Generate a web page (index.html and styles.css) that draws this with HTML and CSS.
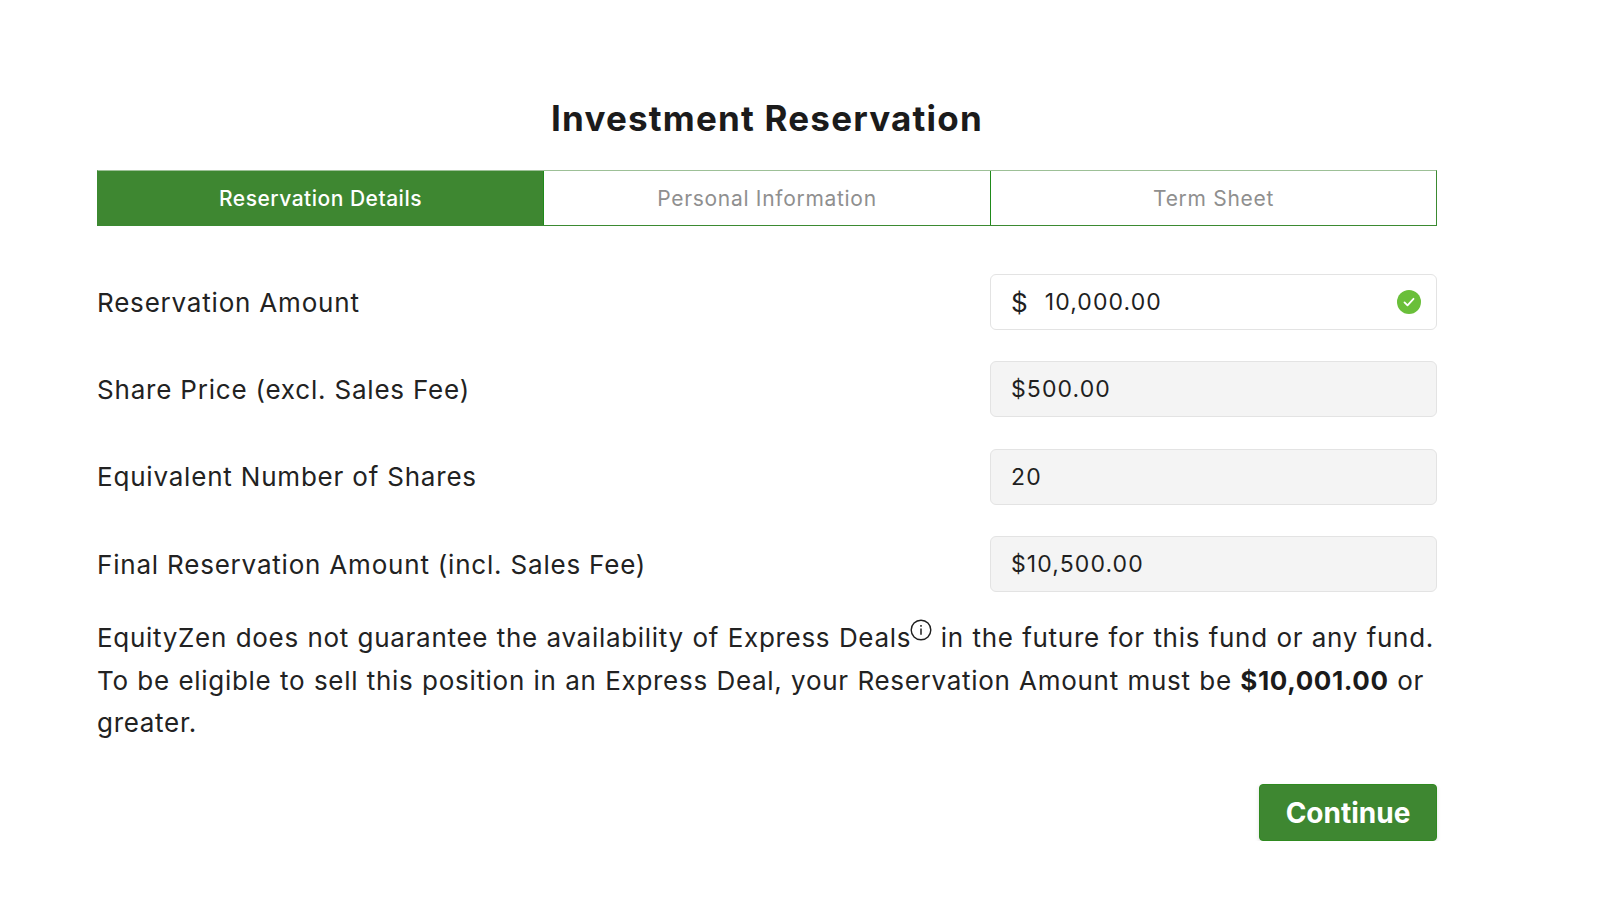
FILE: index.html
```html
<!DOCTYPE html>
<html lang="en">
<head>
<meta charset="utf-8">
<title>Investment Reservation</title>
<link rel="stylesheet" href="styles.css">
</head>
<body>
<main class="page">
  <h1 class="title">Investment Reservation</h1>
  <div class="tabs">
    <div class="tab tab-active">Reservation Details</div>
    <div class="tab">Personal Information</div>
    <div class="tab">Term Sheet</div>
  </div>
  <div class="rows">
    <div class="row">
      <label class="label">Reservation Amount</label>
      <div class="field field-edit">
        <span class="dollar">$</span><span class="amount">10,000.00</span>
        <svg class="check" width="24" height="24" viewBox="0 0 24 24"><circle cx="12" cy="12" r="12" fill="#6abf3a"/><path d="M7.5 12.4l3 3 6-6.6" fill="none" stroke="#fff" stroke-width="1.8" stroke-linecap="round" stroke-linejoin="round"/></svg>
      </div>
    </div>
    <div class="row">
      <label class="label">Share Price (excl. Sales Fee)</label>
      <div class="field">$500.00</div>
    </div>
    <div class="row">
      <label class="label">Equivalent Number of Shares</label>
      <div class="field">20</div>
    </div>
    <div class="row">
      <label class="label">Final Reservation Amount (incl. Sales Fee)</label>
      <div class="field">$10,500.00</div>
    </div>
  </div>
  <p class="note">EquityZen does not guarantee the availability of Express Deals<svg class="info" width="22" height="22" viewBox="0 0 22 22"><circle cx="11" cy="11" r="9.8" fill="none" stroke="#1f1f1f" stroke-width="1.4"/><path d="M11 9.6v6.2M11 6v1.8" stroke="#1f1f1f" stroke-width="1.5" fill="none"/></svg> in the future for this fund or any fund. To be eligible to sell this position in an Express Deal, your Reservation Amount must be <strong>$10,001.00</strong> or greater.</p>
  <div class="actions"><button class="continue" type="button">Continue</button></div>
</main>
</body>
</html>
```
FILE: styles.css
```css
* { box-sizing: border-box; }
html, body { margin: 0; padding: 0; background: #fff; }
body { font-family: Inter, "Open Sans", "Liberation Sans", sans-serif; color: #1f1f1f; }
.page { width: 1340px; margin-left: 97px; padding-top: 94px; }
.title { margin: 0; font-size: 35px; line-height: 48px; font-weight: 700; text-align: center; color: #1b1b1b; letter-spacing: 1.2px; }
.tabs { display: grid; grid-template-columns: 445px 447px 446px; height: 56px; margin-top: 28px; border: 1px solid #3b8a31; border-top-color: #9dc097; }
.tab { display: flex; align-items: center; justify-content: center; font-size: 21px; letter-spacing: .7px; color: #8f8f8f; border-left: 1px solid #1f8a1a; }
.tab:first-child { border-left: 0; }
.tab-active { background: #3e8731; color: #fff; font-weight: 500; letter-spacing: .5px; }
.rows { display: flex; flex-direction: column; gap: 31.4px; margin-top: 48px; }
.row { display: flex; justify-content: space-between; align-items: center; }
.label { font-size: 26px; letter-spacing: .8px; color: #222; }
.field { display: flex; align-items: center; width: 447px; height: 56px; padding: 0 20px; font-size: 23px; letter-spacing: 1.1px; background: #f4f4f4; border: 1px solid #e3e3e3; border-radius: 6px; }
.field-edit { background: #fff; }
.dollar { font-size: 26px; margin-right: 17px; letter-spacing: 0; }
.amount { flex: 1; }
.check { margin-right: -5px; }
.note { margin: 25px 0 0; font-size: 26px; line-height: 42.4px; letter-spacing: .7px; word-spacing: .6px; color: #222; }
.info { vertical-align: 16px; margin: -10px 0 -10px -1px; }
.note strong { font-weight: 700; letter-spacing: .6px; color: #1b1b1b; }
.actions { display: flex; justify-content: flex-end; margin-top: 40px; }
.continue { width: 178px; height: 57px; border: 1px solid #2f8a20; border-radius: 4px; background: #3e8731; color: #fff; font-family: inherit; font-size: 28px; font-weight: 700; box-shadow: 0 2px 4px rgba(0,0,0,.12); }
```
